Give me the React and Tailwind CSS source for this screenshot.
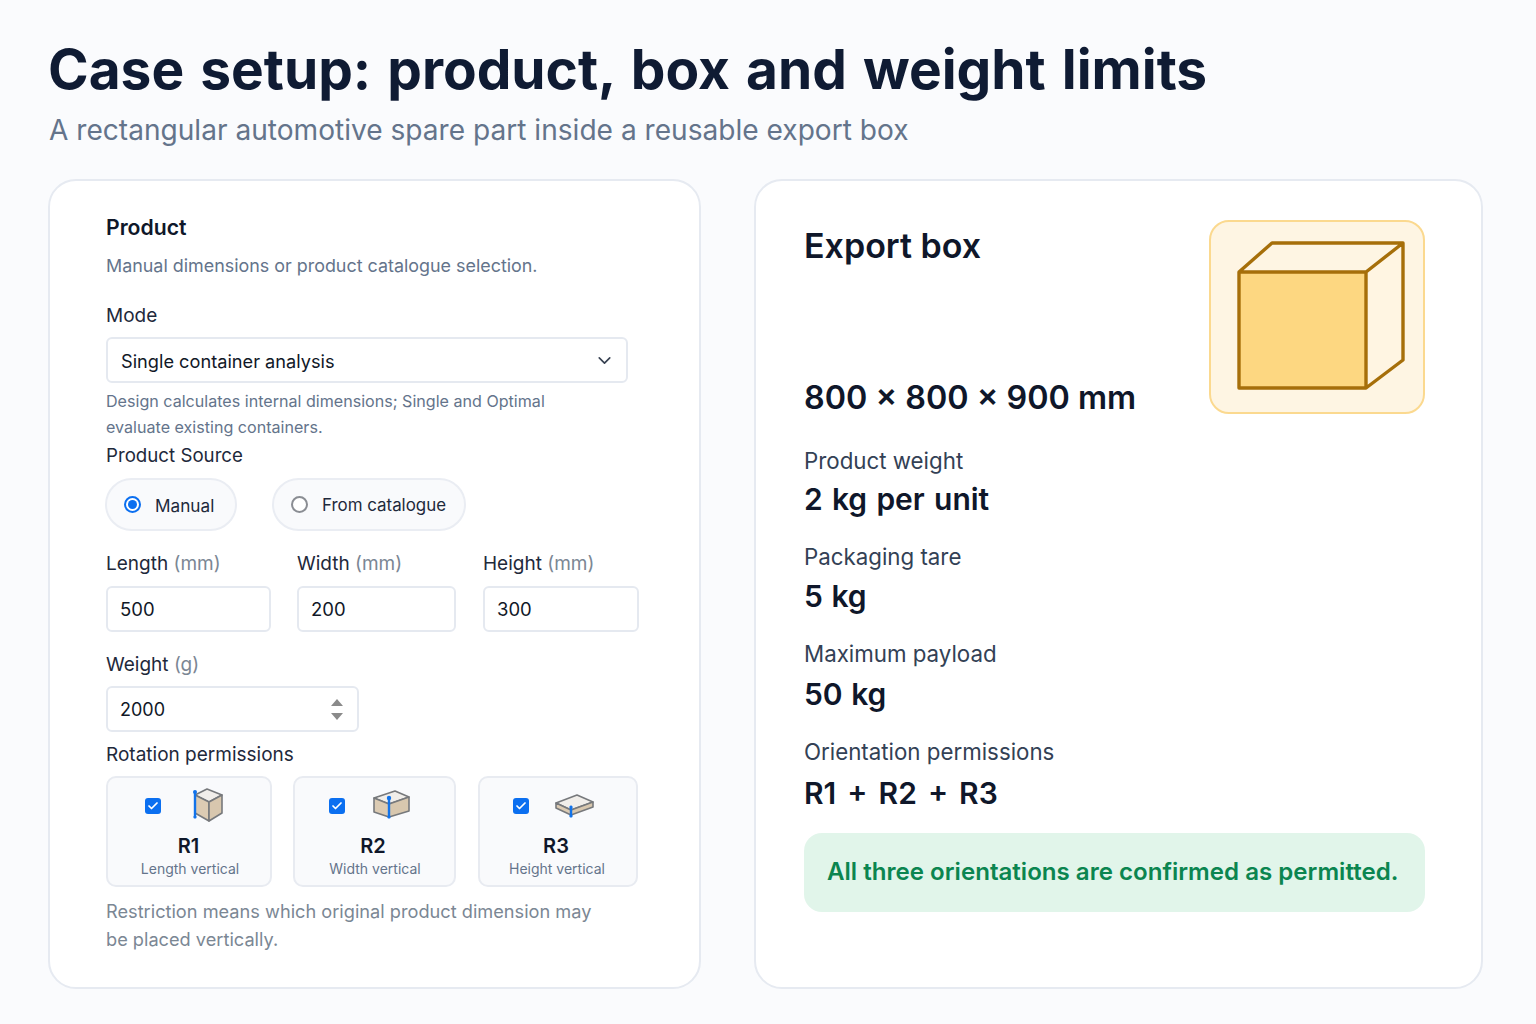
import { ChevronDown, Check } from 'lucide-react';

function BoxIcon({ faces, blue, dot }) {
  // faces: top, left, right polygons in a 48x40 box
  return (
    <svg width="48" height="40" viewBox="0 0 48 40" className="-mt-[2px] shrink-0">
      <polygon points={faces.top} fill="#f1eeea" stroke="#77797c" strokeWidth="1.6" strokeLinejoin="round" />
      <polygon points={faces.left} fill="#dccbb3" stroke="#77797c" strokeWidth="1.6" strokeLinejoin="round" />
      <polygon points={faces.right} fill="#d8c7ae" stroke="#77797c" strokeWidth="1.6" strokeLinejoin="round" />
      <line x1={blue[0]} y1={blue[1]} x2={blue[0]} y2={blue[2]} stroke="#1273ea" strokeWidth="2.4" strokeLinecap="round" />
      <circle cx={blue[0]} cy={blue[1]} r={dot} fill="#1273ea" />
      <circle cx={blue[0]} cy={blue[2]} r="1.6" fill="#1273ea" />
    </svg>
  );
}

const rotations = [
  {
    name: 'R1',
    sub: 'Length vertical',
    width: 'w-[166px]',
    pad: 'pl-[37px]',
    gap: 'gap-[29px]',
    nameShift: 'pr-[1px]',
    subShift: 'pl-[2px]',
    blue: [5, 7, 32],
    dot: 2,
    faces: {
      top: '17,4 32,10 19,17 5,10',
      left: '5,10 19,17 19,36 5,28',
      right: '32,10 32,28 19,36 19,17',
    },
  },
  {
    name: 'R2',
    sub: 'Width vertical',
    width: 'mr-[1px] w-[163px]',
    pad: 'pl-[34px]',
    gap: 'gap-[25px]',
    nameShift: 'pr-[3px]',
    subShift: 'pl-[1px]',
    blue: [19, 13, 32],
    dot: 2.2,
    faces: {
      top: '25,6 39,12 19,19 4,13',
      left: '4,13 19,19 19,32 4,27',
      right: '39,12 39,26 19,32 19,19',
    },
  },
  {
    name: 'R3',
    sub: 'Height vertical',
    width: 'w-[160px]',
    pad: 'pl-[33px]',
    gap: 'gap-[21px]',
    nameShift: 'pr-[4px]',
    subShift: 'pr-[2px]',
    blue: [21, 22, 31],
    dot: 1.6,
    faces: {
      top: '27,10 43,17 21,25 6,18',
      left: '6,18 21,25 21,30 6,23',
      right: '43,17 43,22 21,30 21,25',
    },
  },
];

function Field({ label, unit, value, className }) {
  return (
    <div className={className}>
      <div className="text-[19px] leading-[24px] text-[#1e293b]">
        {label} <span className="text-[#7b8794]">({unit})</span>
      </div>
      <input
        readOnly
        value={value}
        className="mt-[10px] block h-[46px] w-full rounded-[6px] border-2 border-[#e5e9f0] bg-white px-[12px] text-[18.5px] text-[#111827] outline-none"
      />
    </div>
  );
}

function Stat({ label, value, className, valueClass = 'mt-[5px] [word-spacing:1px]' }) {
  return (
    <div className={className}>
      <div className="text-[22.3px] leading-[30px] text-[#334155]">{label}</div>
      <div className={`${valueClass} text-[30px] leading-[38px] font-semibold text-[#0f172a]`}>{value}</div>
    </div>
  );
}

export default function App() {
  return (
    <div className="h-[1024px] overflow-hidden bg-[#fafbfd] pl-[48px] pt-[35px] font-['Inter',sans-serif]">
      <h1 className="text-[55px] leading-[68px] font-bold text-[#0f1b33] [word-spacing:3px]">
        Case setup: product, box and weight limits
      </h1>
      <p className="ml-[1px] mt-[8px] text-[28.1px] leading-[38px] text-[#64748b]">
        A rectangular automotive spare part inside a reusable export box
      </p>

      <div className="mt-[30px] flex gap-[53px]">
        {/* Product card */}
        <section className="h-[810px] w-[653px] shrink-0 rounded-[28px] border-2 border-[#e6eaf1] bg-white pl-[56px] pt-[32px]">
          <h2 className="text-[21.2px] leading-[28px] font-semibold text-[#0f172a]">Product</h2>
          <p className="mt-[11px] text-[17.9px] leading-[28px] text-[#64748b]">
            Manual dimensions or product catalogue selection.
          </p>

          <div className="mt-[23px] text-[19px] leading-[26px] text-[#1e293b]">Mode</div>
          <div className="mt-[8px] flex h-[46px] w-[522px] items-center justify-between rounded-[6px] border-2 border-[#e5e9f0] bg-white pl-[13px] pr-[11px] text-[18.2px] text-[#111827]">
            <span className="pt-[4px]">Single container analysis</span>
            <ChevronDown size={21} strokeWidth={1.9} className="text-[#374151]" />
          </div>
          <p className="mt-[5px] w-[460px] text-[16.1px] leading-[26px] text-[#64748b]">
            Design calculates internal dimensions; Single and Optimal evaluate existing containers.
          </p>

          <div className="mt-[3px] text-[18.7px] leading-[26px] text-[#1e293b]">Product Source</div>
          <div className="-ml-[1px] mt-[9px] flex gap-[35px]">
            <div className="flex h-[53px] w-[132px] items-center rounded-full border-2 border-[#eaedf3] bg-[#f9fafc] pl-[17px] text-[17.2px] text-[#1e293b]">
              <span className="flex h-[17px] w-[17px] items-center justify-center rounded-full border-2 border-[#0b6ff0] bg-white">
                <span className="h-[9px] w-[9px] rounded-full bg-[#0b6ff0]" />
              </span>
              <span className="ml-[14px] pt-[2px]">Manual</span>
            </div>
            <div className="flex h-[53px] w-[194px] items-center rounded-full border-2 border-[#eaedf3] bg-[#f9fafc] pl-[17px] text-[16.9px] text-[#1e293b]">
              <span className="h-[17px] w-[17px] rounded-full border-2 border-[#8a8d93] bg-white" />
              <span className="ml-[14px] pt-[2px]">From catalogue</span>
            </div>
          </div>

          <div className="mt-[21px] flex">
            <Field label="Length" unit="mm" value="500" className="w-[165px]" />
            <Field label="Width" unit="mm" value="200" className="ml-[26px] w-[159px]" />
            <Field label="Height" unit="mm" value="300" className="ml-[27px] w-[156px]" />
          </div>

          <div className="mt-[21px] text-[19px] leading-[24px] text-[#1e293b]">
            Weight <span className="text-[#7b8794]">(g)</span>
          </div>
          <div className="mt-[9px] flex h-[46px] w-[253px] items-center justify-between rounded-[6px] border-2 border-[#e5e9f0] bg-white pl-[12px] pr-[14px] text-[18px] text-[#111827]">
            <span>2000</span>
            <span className="flex flex-col gap-[7px]">
              <span className="h-0 w-0 border-x-[6px] border-b-[7px] border-x-transparent border-b-[#8a8a8a]" />
              <span className="h-0 w-0 border-x-[6px] border-t-[7px] border-x-transparent border-t-[#8a8a8a]" />
            </span>
          </div>

          <div className="mt-[10px] text-[19px] leading-[26px] text-[#1e293b]">Rotation permissions</div>
          <div className="mt-[8px] flex gap-[21px]">
            {rotations.map((r) => (
              <div
                key={r.name}
                className={`${r.width} h-[111px] rounded-[10px] border-2 border-[#e8ebf1] bg-[#f9fafc]`}
              >
                <div className={`${r.pad} ${r.gap} flex h-[50px] items-center pt-[6px]`}>
                  <span className="flex h-[16px] w-[16px] shrink-0 items-center justify-center rounded-[3px] bg-[#0b6ff0]">
                    <Check size={12} strokeWidth={3.5} className="text-white" />
                  </span>
                  <BoxIcon faces={r.faces} blue={r.blue} dot={r.dot} />
                </div>
                <div className={`${r.nameShift} mt-[6px] text-center text-[20px] leading-[24px] font-semibold text-[#0f172a]`}>
                  {r.name}
                </div>
                <div className={`${r.subShift} text-center text-[14px] leading-[22px] text-[#64748b]`}>
                  {r.sub}
                </div>
              </div>
            ))}
          </div>
          <p className="mt-[10px] w-[500px] text-[18.2px] leading-[28px] text-[#7b8794]">
            Restriction means which original product dimension may be placed vertically.
          </p>
        </section>

        {/* Export box card */}
        <section className="h-[810px] w-[729px] shrink-0 rounded-[28px] border-2 border-[#e6eaf1] bg-white pl-[48px] pr-[56px] pt-[39px]">
          <div className="flex justify-between">
            <div>
              <h2 className="mt-[4px] text-[34px] leading-[44px] font-semibold text-[#0f172a]">Export box</h2>
              <div className="mt-[108px] text-[32.3px] leading-[44px] font-semibold text-[#0f172a]">
                800 × 800 × 900 mm
              </div>
            </div>
            <div className="h-[194px] w-[216px] rounded-[20px] border-2 border-[#fbd98f] bg-[#fef5e3]">
              <svg width="212" height="190" viewBox="0 0 212 190" className="block">
                <rect x="28" y="50" width="127" height="116" fill="#fdd781" />
                <polygon points="28,50 61,21 192,21 155,50" fill="#fef5e3" />
                <polygon points="155,50 192,21 192,138 155,166" fill="#fff5e2" />
                <path
                  d="M28 50 H155 V166 H28 Z M28 50 L61 21 H192 L155 50 M192 21 V138 L155 166"
                  fill="none"
                  stroke="#a66f0a"
                  strokeWidth="3.4"
                  strokeLinejoin="round"
                />
              </svg>
            </div>
          </div>

          <Stat
            label="Product weight"
            value="2 kg per unit"
            className="mt-[26px]"
            valueClass="mt-[4px] [word-spacing:1.7px]"
          />
          <Stat label="Packaging tare" value="5 kg" className="mt-[24px]" />
          <Stat
            label="Maximum payload"
            value="50 kg"
            className="mt-[24px]"
            valueClass="mt-[6px] [word-spacing:1px]"
          />
          <Stat
            label="Orientation permissions"
            value="R1 + R2 + R3"
            className="mt-[24px]"
            valueClass="mt-[7px] [word-spacing:3.5px]"
          />

          <div className="mt-[21px] flex h-[79px] items-center rounded-[18px] bg-[#e1f5ea] pl-[23px] text-[24.1px] font-semibold text-[#0b8550]">
            All three orientations are confirmed as permitted.
          </div>
        </section>
      </div>
    </div>
  );
}
